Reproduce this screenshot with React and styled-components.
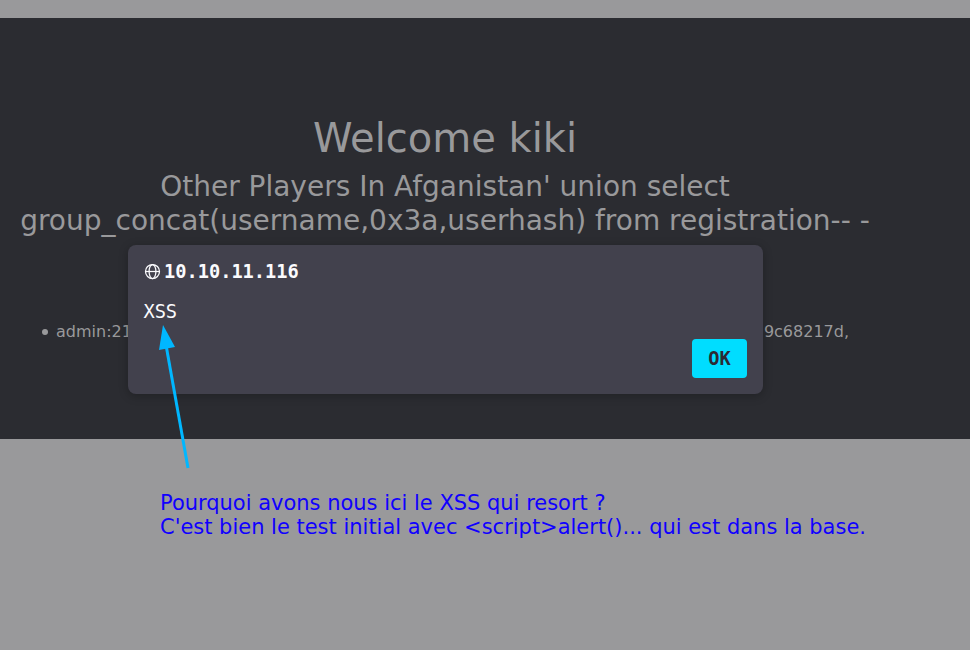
import React from 'react';
import styled, { createGlobalStyle } from 'styled-components';

const GlobalStyle = createGlobalStyle`
  * { box-sizing: border-box; }
  body { margin: 0; background: #99999b; overflow: hidden; }
`;
const Page = styled.div`
  position: relative;
  width: 970px;
  height: 650px;
  padding-top: 18px;
  background: #99999b;
  font-family: 'DejaVu Sans', sans-serif;
  overflow: hidden;
`;
const Hero = styled.section`
  height: 421px;
  padding: 96px 80px 0 0;
  background: #2b2c31;
  color: #99999b;
`;
const Content = styled.div`
  width: 890px;
  text-align: center;
`;
const Title = styled.h1`
  margin: 0;
  font-size: 40px;
  font-weight: 400;
  line-height: 48px;
`;
const Subtitle = styled.h2`
  margin: 8px 0 0;
  font-size: 28px;
  font-weight: 400;
  line-height: 34px;
  white-space: nowrap;
`;
const Players = styled.ul`
  display: flex;
  justify-content: space-between;
  list-style: none;
  margin: 82px 41px 0 40px;
  padding: 0;
  font-size: 16px;
  line-height: 24px;
`;
const Player = styled.li`
  display: flex;
  align-items: center;
  gap: 8px;
`;
const Bullet = styled.span`
  width: 6px;
  height: 6px;
  margin-left: 2px;
  border-radius: 50%;
  background: currentColor;
`;
const Dialog = styled.div`
  position: absolute;
  left: 128px;
  top: 245px;
  width: 635px;
  height: 149px;
  padding: 16px;
  display: flex;
  flex-direction: column;
  border-radius: 8px;
  background: #42414d;
  box-shadow: 0 2px 10px rgba(0, 0, 0, 0.25);
  color: #fbfbfe;
  font-family: 'DejaVu Sans Mono', monospace;
  font-size: 18.66px;
`;
const Host = styled.div`
  display: flex;
  align-items: center;
  gap: 3px;
  height: 20px;
  font-weight: 700;
`;
const Stretched = styled.span`
  display: inline-block;
  transform: scaleY(1.06);
`;
const Message = styled.div`
  margin: 20px 0 0 -0.6px;
  height: 22px;
  line-height: 22px;
`;
const OkButton = styled.button`
  align-self: flex-end;
  margin-top: 16px;
  width: 55px;
  height: 39px;
  flex: none;
  padding: 0;
  border: 0;
  border-radius: 4px;
  background: #00ddff;
  color: #2b2a33;
  font: 700 18.66px 'DejaVu Sans Mono', monospace;
`;
const Arrow = styled.svg`
  position: absolute;
  left: 150px;
  top: 320px;
`;
const Note = styled.p`
  margin: 52px 0 0 160px;
  color: #1000ff;
  font-size: 20.98px;
  line-height: 24px;
  white-space: nowrap;
`;

const Globe = () => (
  <svg width="17" height="17" viewBox="0 0 17 17" fill="none" stroke="currentColor" strokeWidth="1.25">
    <circle cx="8.5" cy="8.5" r="7" />
    <ellipse cx="8.5" cy="8.5" rx="3.4" ry="7" />
    <path d="M1.5 8.5h14" />
  </svg>
);

export default function App() {
  return (
    <Page>
      <GlobalStyle />
      <Hero>
        <Content>
          <Title>Welcome kiki</Title>
          <Subtitle>
            Other Players In Afganistan' union select
            <br />
            group_concat(username,0x3a,userhash) from registration-- -
          </Subtitle>
          <Players>
            <Player><Bullet />admin:21</Player>
            <li>9c68217d,</li>
          </Players>
        </Content>
      </Hero>
      <Note>
        Pourquoi avons nous ici le XSS qui resort ?
        <br />
        C'est bien le test initial avec &lt;script&gt;alert()... qui est dans la base.
      </Note>
      <Dialog>
        <Host><Globe /><Stretched>10.10.11.116</Stretched></Host>
        <Message><Stretched>XSS</Stretched></Message>
        <OkButton><Stretched>OK</Stretched></OkButton>
      </Dialog>
      <Arrow width="50" height="155">
        <path d="M38 148 L16 25" stroke="#00b7ff" strokeWidth="3" />
        <path d="M13 5 L25 27 L9 30 Z" fill="#00b7ff" />
      </Arrow>
    </Page>
  );
}
